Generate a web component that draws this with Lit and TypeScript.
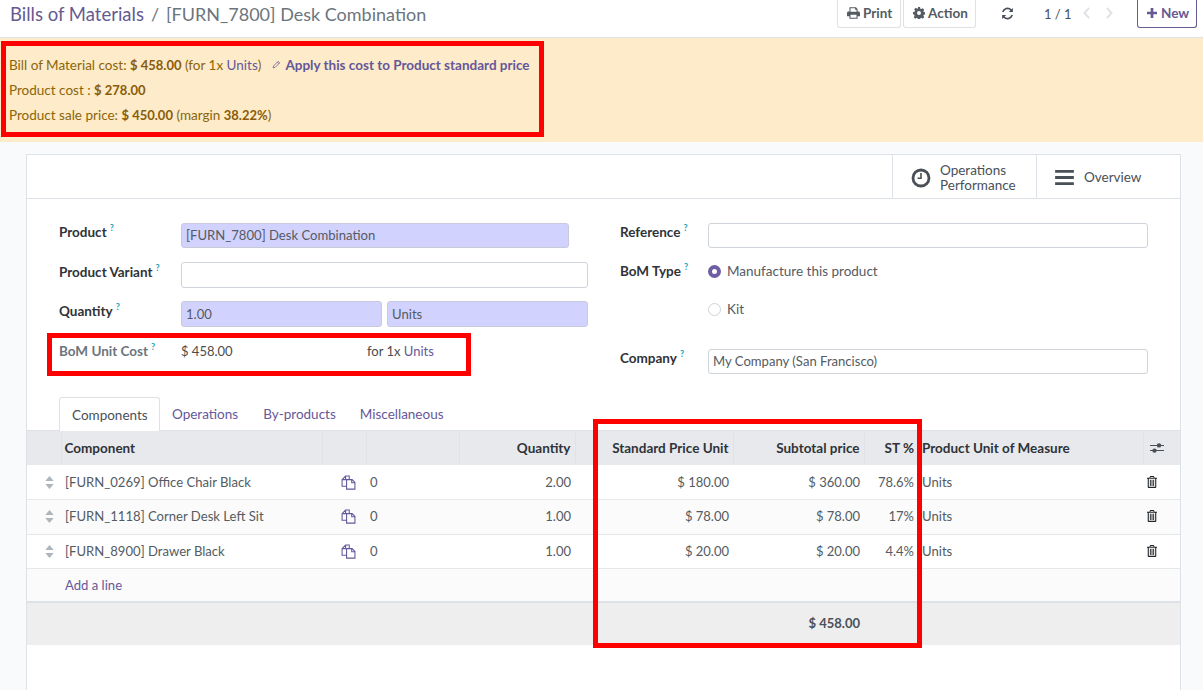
import { LitElement, html, css, svg } from "lit";
import { customElement } from "lit/decorators.js";

const ic = (vb: string, p: any) => html`<svg class="ic" viewBox=${vb} fill="currentColor">${p}</svg>`;
const printIc = ic("0 0 16 14", svg`<path fill-rule="evenodd" d="M3 0h8l2 2v3.200h1.200c1 0 1.800.8 1.800 1.800v4h-3v3H3v-3H0V7c0-1 .8-1.800 1.800-1.800H3zM4.300 1.300v4.200h7.400V3H10V1.300zM4.300 9v3.700h7.400V9z"/>`);
const cogIc = ic("0 0 14 14", svg`<path fill-rule="evenodd" d="M5.800 0h2.400l.4 1.900 1.100.5 1.700-1 1.700 1.700-1 1.700.5 1.100 1.900.4v2.400l-1.900.4-.5 1.100 1 1.700-1.700 1.700-1.700-1-1.100.5-.4 1.900H5.800l-.4-1.900-1.100-.5-1.700 1L.9 11.900l1-1.700-.5-1.100L0 8.200V5.800l1.900-.4.500-1.100-1-1.700L3.100 .9l1.700 1 1.100-.5zM7 4.700a2.300 2.300 0 1 0 0 4.600 2.300 2.300 0 0 0 0-4.600z"/>`);
const refreshIc = ic("0 0 14 14", svg`<path d="M12.800 1v4.400H8.400l1.700-1.700A4.300 4.300 0 0 0 3 5.300H1.100a6.100 6.100 0 0 1 10.300-2.900zM1.200 13V8.600h4.400L3.900 10.300A4.300 4.300 0 0 0 11 8.700h1.900a6.100 6.100 0 0 1-10.300 2.900z"/>`);
const leftIc = ic("0 0 9 14", svg`<path d="M7 1 1.500 7 7 13" fill="none" stroke="currentColor" stroke-width="2.200"/>`);
const rightIc = ic("0 0 9 14", svg`<path d="M2 1l5.500 6L2 13" fill="none" stroke="currentColor" stroke-width="2.200"/>`);
const plusIc = ic("0 0 11 11", svg`<path d="M4 0h3v4h4v3H7v4H4V7H0V4h4z"/>`);
const clockIc = ic("0 0 20 20", svg`<circle cx="10" cy="10" r="8" fill="none" stroke="currentColor" stroke-width="2.800"/><path d="M10.800 5v6H6.500V9.400h2.700V5z"/>`);
const barsIc = ic("0 0 20 16", svg`<path d="M0 0h20v3H0zM0 6.500h20v3H0zM0 13h20v3H0z"/>`);
const cloneIc = ic("0 0 14 14", svg`<path fill="none" stroke="currentColor" stroke-width="1" d="M5 10.500H1V4.300L4.300 1h3.400v3.200M4.300 1v3.300H1M5.200 4.300h5.200l2.600 2.600v6.300H5.200zM10 4.300v3h3"/>`);
const sortIc = ic("0 0 9 14", svg`<path d="M4.500 0 9 5.500H0zM0 8.500h9L4.500 14z"/>`);
const slidersIc = ic("0 0 14 12", svg`<path d="M0 2.900h14v1H0zM0 8.100h14v1H0z"/><circle cx="9" cy="3.400" r="2.200"/><circle cx="4.500" cy="8.600" r="2.200"/>`);
const trashIc = ic("0 0 11 13", svg`<path fill-rule="evenodd" d="M3.500 0h4l.8 1.700H11v1.200h-.8V12a1 1 0 0 1-1 1H1.800a1 1 0 0 1-1-1V2.900H0V1.700h2.700zM4 1l-.3.700h3.600L7 1zM2 2.900V11.800h7V2.900zM3.200 4h1v6.800h-1zM5 4h1v6.800H5zM6.800 4h1v6.800h-1z"/>`);
const pencilIc = ic("0 0 12 12", svg`<path fill="none" stroke="currentColor" stroke-width="1" d="M1.500 10.500l.6-2.600L8.200 1.800l2 2L4.100 9.900zM7.200 2.800l2 2"/>`);

interface Line { name: string; qty: string; price: string; sub: string; st: string }
const lines: Line[] = [
  { name: "[FURN_0269] Office Chair Black", qty: "2.00", price: "$ 180.00", sub: "$ 360.00", st: "78.6%" },
  { name: "[FURN_1118] Corner Desk Left Sit", qty: "1.00", price: "$ 78.00", sub: "$ 78.00", st: "17%" },
  { name: "[FURN_8900] Drawer Black", qty: "1.00", price: "$ 20.00", sub: "$ 20.00", st: "4.4%" },
];

@customElement("app-root")
export class AppRoot extends LitElement {
  static styles = css`
    :host { display: block; position: relative; width: 1203px; height: 690px; overflow: hidden; background: #f9fafb;
      font-family: "Lato", "Noto Sans", sans-serif; font-size: 13.500px; color: #4c4c4c; }
    * { box-sizing: border-box; }
    .ic { display: block; flex: none; width: 100%; height: 100%; }
    .link { color: #65579a; }
    .top { height: 38px; background: #fff; border-bottom: 1px solid #dee2e6; display: flex; align-items: center; padding-left: 10px; }
    .crumb { font-size: 18px; color: #6c757d; display: flex; gap: 7px; margin-bottom: 9px; flex: 1; }
    .crumb .link { color: #655a92; font-size: 18.500px; }
    .actions { display: flex; align-items: flex-start; height: 100%; padding-right: 6px; }
    .btn { height: 29px; margin-top: -1px; border: 1px solid #dee2e6; border-top: 0; border-radius: 0 0 3px 3px; display: flex; align-items: center; gap: 3px; padding: 0 0 0 9px;
      font-weight: 700; font-size: 13.500px; color: #545b62; background: #fff; }
    .btn .bi { width: 13px; height: 12px; flex: none; }
    .b-print { width: 64px; margin-right: 2px; }
    .b-action { width: 73px; margin-right: 25px; }
    .b-action .bi { width: 12px; }
    .refresh { width: 13px; height: 13px; margin: 7px 30px 0 0; color: #495057; }
    .pager { font-size: 13px; color: #495057; margin: 6px 15px 0 0; width: 24px; white-space: nowrap; }
    .chev { width: 8px; height: 12px; margin: 7px 14px 0 0; color: #dee2e6; }
    .chev.last { margin-right: 24px; }
    .b-new { width: 60px; border: 1px solid #655a92; border-top: 0; color: #655a92; gap: 4px; }
    .b-new .bi { width: 10px; height: 10px; }
    .alert { height: 104px; background: #fdebc9; color: #8b6508; padding: 14px 9px 0; display: flex; flex-direction: column; }
    .alert div { height: 25px; display: flex; align-items: center; white-space: pre; }
    .alert b { color: #8a5c08; font-size: 13px; }
    .alert .apply { color: #65579a; font-weight: 700; margin-left: 11px; display: inline-flex; align-items: center; gap: 4px; }
    .apply .pi { width: 9px; height: 9px; display: block; }
    .sheet { margin: 12px 22px 0 26px; background: #fff; border: 1px solid #dee2e6; height: 540px; }
    .stat { height: 44px; border-bottom: 1px solid #dee2e6; display: flex; justify-content: flex-end; }
    .stat > div { width: 144px; border-left: 1px solid #dee2e6; display: flex; align-items: center; gap: 9px; padding: 2px 0 0 18px; color: #495057; line-height: 15px; }
    .stat .clock { width: 20px; height: 20px; }
    .stat .bars { width: 19px; height: 15px; margin-right: 1px; }
    .form { display: grid; grid-template-columns: 529px 528px; column-gap: 32px; padding: 24px 0 0 32px; height: 199px; }
    .col { display: flex; flex-direction: column; }
    .row { display: grid; align-items: start; min-height: 26px; }
    .l .row { grid-template-columns: 122px 407px; margin-bottom: 13px; }
    .r .row { grid-template-columns: 88px 440px; }
    .lab { font-weight: 700; color: #2f3338; padding-top: 1px; white-space: nowrap; }
    .lab.p2 { padding-top: 2px; }
    .lab.p5 { padding-top: 5px; }
    sup { color: #17a2b8; font-size: 9px; line-height: 0; margin-left: 3px; font-weight: 700; vertical-align: 6px; }
    .inp { height: 26px; border: 1px solid #ced4da; border-radius: 3px; padding: 0 4px; display: flex; align-items: center; background: #fff; font-size: 13.100px; color: #545b62; }
    .inp.h25 { height: 25px; padding-bottom: 2px; }
    .req { background: #d2d2ff; border-color: #c8cadb; }
    .w388 { width: 388px; }
    .pair { display: grid; grid-template-columns: 201px 201px; gap: 5px; }
    .mut { color: #6c757d; }
    .cost { display: grid; grid-template-columns: 122px 186px auto; padding-top: 2px; }
    .val { padding-top: 1px; font-size: 13px; }
    .radio { display: flex; align-items: center; gap: 6px; height: 26px; color: #545b62; }
    .dot { width: 13px; height: 13px; border-radius: 50%; border: 1px solid #ced4da; background: #fff; flex: none; }
    .dot.on { border: 4px solid #6f5ea3; }
    .r-bom { height: 38px; margin-top: 9px; }
    .r-kit { height: 53px; }
    .tabs { display: flex; padding-left: 32px; height: 34px; margin-top: -1px; border-bottom: 1px solid #dee2e6; }
    .tab { padding: 9px 12px 0; color: #65579a; }
    .tab.t2 { padding-left: 13px; padding-right: 11px; }
    .tab.on { border: 1px solid #dee2e6; border-bottom: 0; background: #fff; color: #495057; height: 34px; border-radius: 3px 3px 0 0; width: 101px; }
    table { border-collapse: collapse; table-layout: fixed; width: 1153px; }
    .c1 { width: 34px; } .c2 { width: 261px; } .c3 { width: 44px; } .c4 { width: 93px; } .c5 { width: 116px; }
    .c6 { width: 158px; } .c7 { width: 131px; } .c8 { width: 54px; } .c9 { width: 225px; } .c10 { width: 37px; }
    th { height: 34px; background: #e7e9ed; font-weight: 700; text-align: left; padding: 0 4px; color: #2f3338; border-left: 1px solid #dfe2e6; white-space: nowrap; }
    th:first-child, th.nb { border-left: 0; }
    th.comp { padding-left: 3px; }
    td { height: 34.500px; padding: 0 4px; border-bottom: 1px solid #e5e8eb; white-space: nowrap; background: #fff; font-size: 13.100px; color: #545b62; }
    td.m13 { font-size: 13px; }
    tr.even td { background: #fbfbfb; padding-bottom: 1px; }
    .num { text-align: right; }
    td.handle { color: #adb5bd; padding: 0 0 0 18px; }
    .hd { width: 9px; height: 13px; display: block; }
    .clone { color: #65579a; width: 15px; height: 15px; display: block; margin-left: 15px; }
    .trash { width: 10px; height: 12px; color: #212529; display: block; }
    .sl { width: 14px; height: 12px; color: #495057; display: block; margin-left: 2px; }
    tr.add td { height: 33.500px; background: #fbfbfb; border-bottom: 2px solid #dee2e6; padding-bottom: 1px; }
    tr.add td.link { color: #65579a; }
    tr.foot td { height: 43px; background: #eeeeef; border: 0; font-weight: 700; color: #495057; font-size: 13px; padding-bottom: 3px; }
    .mark { position: absolute; border: 5px solid #f00; pointer-events: none; }
    .m1 { left: 1px; top: 41px; width: 543px; height: 96px; }
    .m2 { left: 47px; top: 333px; width: 424px; height: 43px; }
    .m3 { left: 593px; top: 419px; width: 329px; height: 229px; }
  `;

  render() {
    return html`
      <div class="top">
        <div class="crumb"><span class="link">Bills of Materials</span><span>/</span><span>[FURN_7800] Desk Combination</span></div>
        <div class="actions">
          <div class="btn b-print"><span class="bi">${printIc}</span>Print</div>
          <div class="btn b-action"><span class="bi">${cogIc}</span>Action</div>
          <span class="refresh">${refreshIc}</span>
          <span class="pager">1 / 1</span>
          <span class="chev">${leftIc}</span>
          <span class="chev last">${rightIc}</span>
          <div class="btn b-new"><span class="bi">${plusIc}</span>New</div>
        </div>
      </div>
      <div class="alert">
        <div>Bill of Material cost: <b>$ 458.00</b> (for 1x <span class="link">Units</span>)<span class="apply"><span class="pi">${pencilIc}</span>Apply this cost to Product standard price</span></div>
        <div>Product cost : <b>$ 278.00</b></div>
        <div>Product sale price: <b>$ 450.00</b> (margin <b>38.22%</b>)</div>
      </div>
      <div class="sheet">
        <div class="stat">
          <div><span class="clock">${clockIc}</span><span>Operations<br />Performance</span></div>
          <div><span class="bars">${barsIc}</span><span>Overview</span></div>
        </div>
        <div class="form">
          <div class="col l">
            <div class="row"><div class="lab">Product<sup>?</sup></div><div class="inp req w388 h25">[FURN_7800] Desk Combination</div></div>
            <div class="row"><div class="lab p2">Product Variant<sup>?</sup></div><div class="inp"></div></div>
            <div class="row"><div class="lab p2">Quantity<sup>?</sup></div><div class="pair"><div class="inp req">1.00</div><div class="inp req">Units</div></div></div>
            <div class="cost"><div class="lab mut">BoM Unit Cost<sup>?</sup></div><div class="val">$ 458.00</div><div class="val">for 1x <span class="link">Units</span></div></div>
          </div>
          <div class="col r">
            <div class="row"><div class="lab">Reference<sup>?</sup></div><div class="inp h25"></div></div>
            <div class="row r-bom"><div class="lab p5">BoM Type<sup>?</sup></div><div class="radio"><span class="dot on"></span>Manufacture this product</div></div>
            <div class="row r-kit"><div></div><div class="radio"><span class="dot"></span>Kit</div></div>
            <div class="row"><div class="lab">Company<sup>?</sup></div><div class="inp h25">My Company (San Francisco)</div></div>
          </div>
        </div>
        <div class="tabs">
          <div class="tab on">Components</div><div class="tab">Operations</div><div class="tab t2">By-products</div><div class="tab t2">Miscellaneous</div>
        </div>
        <table>
          <colgroup><col class="c1" /><col class="c2" /><col class="c3" /><col class="c4" /><col class="c5" /><col class="c6" /><col class="c7" /><col class="c8" /><col class="c9" /><col class="c10" /></colgroup>
          <thead><tr>
            <th></th><th class="comp">Component</th><th></th><th></th><th class="num">Quantity</th><th class="num">Standard Price Unit</th><th class="num">Subtotal price</th><th class="num">ST %</th><th class="nb">Product Unit of Measure</th><th><span class="sl">${slidersIc}</span></th>
          </tr></thead>
          <tbody>
            ${lines.map((l, i) => html`<tr class=${i === 1 ? "even" : ""}>
              <td class="handle"><span class="hd">${sortIc}</span></td><td>${l.name}</td><td><span class="clone">${cloneIc}</span></td><td>0</td><td class="num m13">${l.qty}</td><td class="num m13">${l.price}</td><td class="num m13">${l.sub}</td><td class="num m13">${l.st}</td><td>Units</td><td><span class="trash">${trashIc}</span></td>
            </tr>`)}
            <tr class="add"><td></td><td colspan="9" class="link">Add a line</td></tr>
            <tr class="foot"><td colspan="6"></td><td class="num">$ 458.00</td><td colspan="3"></td></tr>
          </tbody>
        </table>
      </div>
      <div class="mark m1"></div>
      <div class="mark m2"></div>
      <div class="mark m3"></div>
    `;
  }
}
